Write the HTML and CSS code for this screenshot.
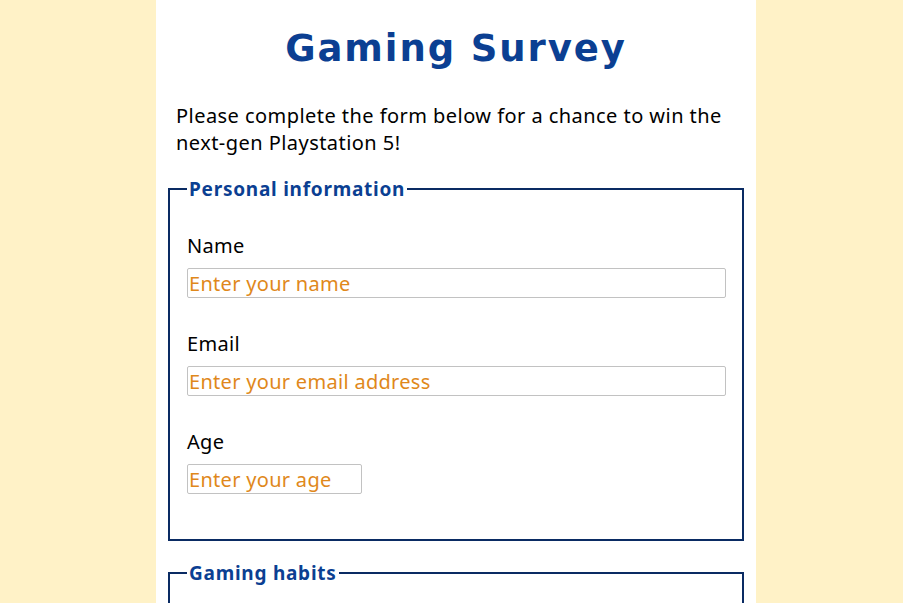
FILE: index.html
```html
<!DOCTYPE html>
<html lang="en">
<head>
<meta charset="utf-8">
<title>Gaming Survey</title>
<link rel="stylesheet" href="styles.css">
</head>
<body>
<main class="page">
  <h1 class="title">Gaming Survey</h1>
  <p class="intro">Please complete the form below for a chance to win the next-gen Playstation 5!</p>
  <form class="survey">
    <fieldset class="group">
      <legend class="group-title">Personal information</legend>
      <div class="field">
        <label class="field-label" for="name">Name</label>
        <input class="field-input" id="name" type="text" placeholder="Enter your name">
      </div>
      <div class="field">
        <label class="field-label" for="email">Email</label>
        <input class="field-input" id="email" type="email" placeholder="Enter your email address">
      </div>
      <div class="field">
        <label class="field-label" for="age">Age</label>
        <input class="field-input field-input--short" id="age" type="number" placeholder="Enter your age">
      </div>
    </fieldset>
    <fieldset class="group">
      <legend class="group-title">Gaming habits</legend>
      <div class="field">
        <label class="field-label" for="hours">How many hours do you play per week?</label>
        <input class="field-input" id="hours" type="number" placeholder="Enter hours">
      </div>
    </fieldset>
  </form>
</main>
</body>
</html>
```

FILE: styles.css
```css
html, body {
  margin: 0;
  padding: 0;
}
body {
  background: #fff2c7;
  font-family: "Noto Sans", "Open Sans", sans-serif;
  color: #000;
  padding-left: 9px;
}
.page {
  width: 600px;
  margin: 0 auto;
  background: #fff;
  min-height: 100vh;
  padding: 20px 0 40px;
  box-sizing: border-box;
}
.title {
  margin: 0;
  padding-top: 4px;
  text-align: center;
  font-family: "DejaVu Sans", sans-serif;
  font-weight: bold;
  font-size: 37px;
  line-height: 50px;
  color: #0b3f92;
  letter-spacing: 1.9px;
}
.intro {
  margin: 28px 20px 0 20px;
  font-size: 20px;
  line-height: 27px;
  letter-spacing: 0.45px;
}
.survey {
  margin: 20px 12px 0;
}
.group {
  margin: 0 0 19px;
  border: 2px solid #0a2b63;
  padding: 24px 16px 45px 17px;
}
.group-title {
  padding: 0 2px;
  font-weight: bold;
  font-size: 19px;
  letter-spacing: 0.75px;
  color: #0b3f92;
}
.field {
  margin-top: 8px;
}
.field + .field {
  margin-top: 34px;
}
.field-label {
  display: block;
  font-size: 20px;
  line-height: 24px;
  letter-spacing: 0.3px;
  margin-bottom: 10px;
}
.field-input {
  display: block;
  width: 100%;
  height: 30px;
  box-sizing: border-box;
  border: 1px solid #c2c2c2;
  border-radius: 2px;
  padding: 0 1px;
  font-family: inherit;
  font-size: 20px;
  letter-spacing: 0.3px;
  background: #fff;
}
.field-input--short {
  width: 175px;
}
.field-input::placeholder {
  color: #e0881b;
  opacity: 1;
}
```
